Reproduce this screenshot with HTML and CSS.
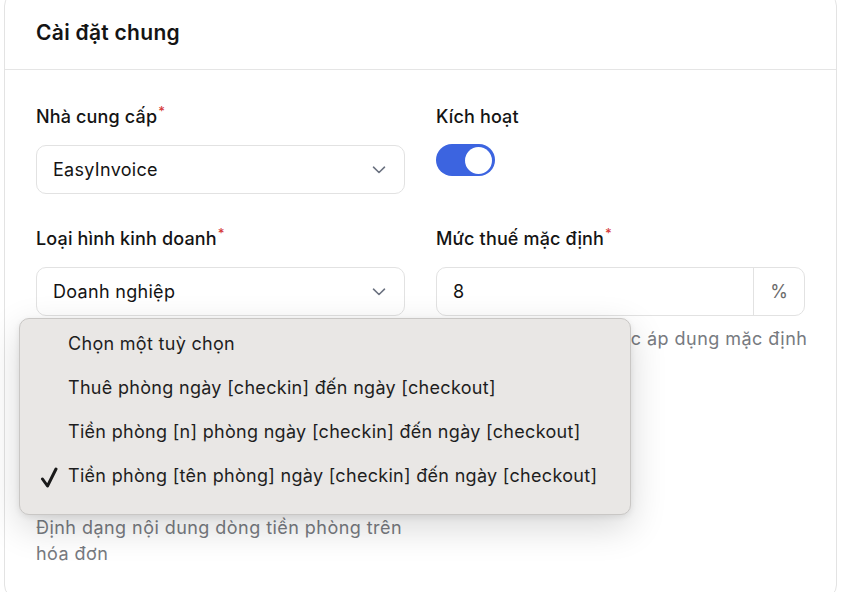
FILE: index.html
```html
<!DOCTYPE html>
<html lang="vi">
<head>
<meta charset="utf-8">
<title>Cài đặt chung</title>
<link rel="stylesheet" href="styles.css">
</head>
<body>
<div class="page">
  <section class="card">
    <header class="card-header">
      <h2 class="card-title">Cài đặt chung</h2>
    </header>
    <div class="card-body">
      <div class="field">
        <label class="label">Nhà cung cấp<span class="req">*</span></label>
        <div class="select">
          <span>EasyInvoice</span>
          <svg class="chev" width="14" height="8" viewBox="0 0 14 8"><path d="M1.5 1.2 L7 6.5 L12.5 1.2" fill="none" stroke="#6b7280" stroke-width="1.6" stroke-linecap="round" stroke-linejoin="round"/></svg>
        </div>
      </div>
      <div class="field">
        <label class="label">Kích hoạt</label>
        <div class="toggle"><span class="knob"></span></div>
      </div>
      <div class="field">
        <label class="label">Loại hình kinh doanh<span class="req">*</span></label>
        <div class="select">
          <span>Doanh nghiệp</span>
          <svg class="chev" width="14" height="8" viewBox="0 0 14 8"><path d="M1.5 1.2 L7 6.5 L12.5 1.2" fill="none" stroke="#6b7280" stroke-width="1.6" stroke-linecap="round" stroke-linejoin="round"/></svg>
        </div>
      </div>
      <div class="field">
        <label class="label">Mức thuế mặc định<span class="req">*</span></label>
        <div class="input-group">
          <span class="input-value">8</span>
          <span class="addon">%</span>
        </div>
        <p class="help nowrap">Thuế suất VAT sẽ được áp dụng mặc định</p>
      </div>
      <div class="field field-wide">
        <label class="label">Định dạng dòng tiền phòng<span class="req">*</span></label>
        <div class="select">
          <span>Tiền phòng [tên phòng] ngày [checkin]…</span>
          <svg class="chev" width="14" height="8" viewBox="0 0 14 8"><path d="M1.5 1.2 L7 6.5 L12.5 1.2" fill="none" stroke="#6b7280" stroke-width="1.6" stroke-linecap="round" stroke-linejoin="round"/></svg>
        </div>
        <p class="help help-wrap">Định dạng nội dung dòng tiền phòng trên hóa đơn</p>
      </div>
    </div>

    <ul class="menu">
      <li class="menu-item">Chọn một tuỳ chọn</li>
      <li class="menu-item">Thuê phòng ngày [checkin] đến ngày [checkout]</li>
      <li class="menu-item">Tiền phòng [n] phòng ngày [checkin] đến ngày [checkout]</li>
      <li class="menu-item selected">
        <svg class="check" width="18" height="22" viewBox="0 0 18 22"><path d="M2.5 13 L7.5 20 L16 3" fill="none" stroke="#1a1a1a" stroke-width="3" stroke-linecap="round" stroke-linejoin="round"/></svg>
        Tiền phòng [tên phòng] ngày [checkin] đến ngày [checkout]
      </li>
    </ul>
  </section>
</div>
</body>
</html>
```

FILE: styles.css
```css
* { box-sizing: border-box; }
html, body { margin: 0; padding: 0; background: #ffffff; }
body {
  font-family: Inter, "Noto Sans", "Liberation Sans", sans-serif;
  color: #141414;
  overflow: hidden;
}
.page {
  padding: 0 4px;
  height: 600px;
}
.card {
  position: relative;
  margin-top: -8px;
  width: 833px;
  height: 607px;
  border: 1px solid #e3e3e3;
  border-radius: 14px;
  background: #fff;
}
.card-header {
  height: 77px;
  border-bottom: 1px solid #e5e5e5;
  padding: 0 31px;
  display: flex;
  align-items: center;
}
.card-title {
  margin: 0;
  padding-top: 3px;
  font-size: 21px;
  font-weight: 600;
  letter-spacing: 0.3px;
  color: #141414;
}
.card-body {
  padding: 34px 31px 0;
  display: grid;
  grid-template-columns: minmax(0, 1fr) minmax(0, 1fr);
  column-gap: 31px;
  row-gap: 32px;
}
.field { display: flex; flex-direction: column; min-width: 0; }
.field-wide { margin-top: 31px; }
.label {
  font-size: 18px;
  line-height: 26px;
  font-weight: 500;
  letter-spacing: 0.15px;
  color: #141414;
  margin-bottom: 14px;
}
.req {
  color: #d63a3a;
  font-size: 13px;
  position: relative;
  top: -7px;
  margin-left: 1px;
}
.select {
  height: 49px;
  border: 1px solid #e2e2e2;
  border-radius: 10px;
  display: flex;
  align-items: center;
  justify-content: space-between;
  padding: 0 18px 0 16px;
  font-size: 18px;
  letter-spacing: 0.3px;
  color: #141414;
  background: #fff;
}
.select span { white-space: nowrap; overflow: hidden; }
.chev { flex: none; }
.toggle {
  width: 59px;
  height: 32px;
  border-radius: 16px;
  background: #3c64e0;
  display: flex;
  align-items: center;
  justify-content: flex-end;
  padding-right: 3px;
}
.knob {
  width: 27px;
  height: 27px;
  border-radius: 50%;
  background: #fff;
}
.input-group {
  height: 49px;
  border: 1px solid #e2e2e2;
  border-radius: 10px;
  display: flex;
  align-items: stretch;
  font-size: 18px;
}
.input-value {
  flex: 1;
  display: flex;
  align-items: center;
  padding-left: 16px;
}
.addon {
  width: 51px;
  border-left: 1px solid #e2e2e2;
  display: flex;
  align-items: center;
  justify-content: center;
  color: #6b6b6b;
}
.help {
  margin: 10px 0 0;
  font-size: 18px;
  line-height: 26px;
  letter-spacing: 0.45px;
  color: #777a80;
}
.nowrap { white-space: nowrap; }
.help-wrap { max-width: 368px; }
.menu {
  position: absolute;
  left: 14px;
  top: 325px;
  width: 612px;
  height: 197px;
  margin: 0;
  padding: 2px 0 0;
  list-style: none;
  background: #e9e7e5;
  border: 1px solid #c9c7c5;
  border-radius: 10px;
  box-shadow: 0 12px 36px rgba(0,0,0,0.16), 0 2px 6px rgba(0,0,0,0.08);
}
.menu-item {
  position: relative;
  height: 44px;
  display: flex;
  align-items: center;
  padding-left: 48px;
  font-size: 18px;
  letter-spacing: 0.3px;
  color: #1e1e1e;
  white-space: nowrap;
}
.check {
  position: absolute;
  left: 20px;
  top: 13px;
}
```
